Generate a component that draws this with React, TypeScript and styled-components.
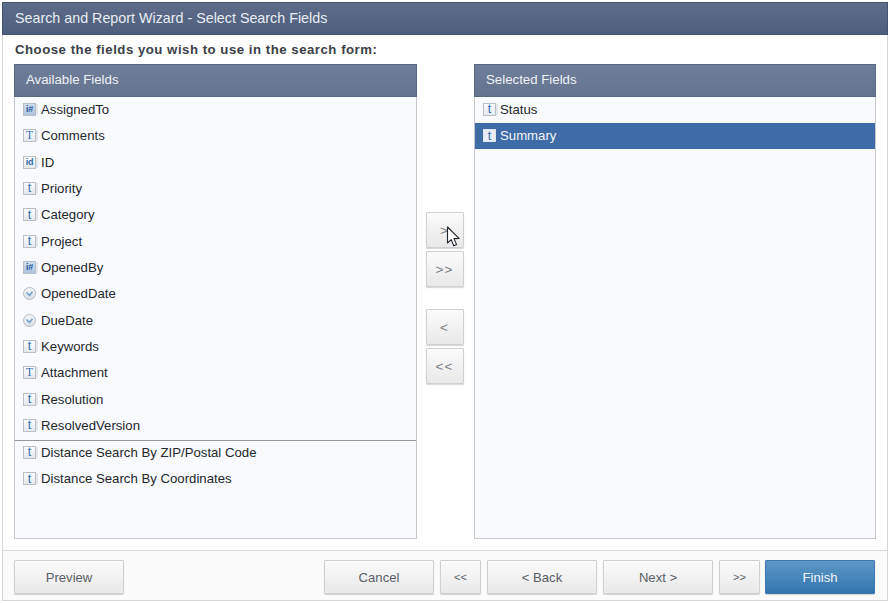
import React from "react";
import styled, { createGlobalStyle } from "styled-components";

const Global = createGlobalStyle`
  html, body { margin: 0; padding: 0; background: #fff; }
  body { width: 890px; height: 603px; overflow: hidden; font-family: "Liberation Sans", Arial, sans-serif; }
`;

const Frame = styled.div`
  box-sizing: border-box;
  width: 886px;
  height: 599px;
  margin: 2px 0 0 2px;
  border: 1px solid #d4d6da;
  border-top: 0;
  display: flex;
  flex-direction: column;
  position: relative;
`;

const TitleBar = styled.div`
  box-sizing: border-box;
  height: 33px;
  margin: 0 -1px;
  flex: none;
  padding: 0 0 2px 12px;
  display: flex;
  align-items: center;
  background: linear-gradient(#5d6c89, #4e5e7d);
  border: 1px solid #45536f;
  color: #e9edf3;
  font-size: 14.3px;
`;

const Instruction = styled.div`
  height: 29px;
  flex: none;
  padding-left: 12px;
  display: flex;
  align-items: center;
  font-size: 13.2px;
  font-weight: 700;
  letter-spacing: 0.52px;
  color: #3b4048;
`;

const Body = styled.div`
  height: 475px;
  flex: none;
  padding: 0 11px;
  display: grid;
  grid-template-columns: 403px 57px 402px;
`;

const Panel = styled.section`
  box-sizing: border-box;
  display: flex;
  flex-direction: column;
  border: 1px solid #c5c8cd;
  border-top: 0;
  background: linear-gradient(#fff 0, #f8fafe 44px);
  min-height: 0;
`;

const PanelHeader = styled.header`
  box-sizing: border-box;
  height: 33px;
  margin: 0 -1px;
  flex: none;
  padding: 0 0 2px 11px;
  display: flex;
  align-items: center;
  background: linear-gradient(#6f7f9b, #64748f);
  border: 1px solid #5a6983;
  color: #eef1f6;
  font-size: 13.25px;
`;

const FieldList = styled.ul`
  list-style: none;
  margin: -0.5px 0 0;
  padding: 0;
`;

const Row = styled.li<{ $selected?: boolean; $gap?: number }>`
  box-sizing: border-box;
  height: 26.33px;
  padding-left: 8px;
  display: flex;
  align-items: center;
  gap: ${(p) => p.$gap ?? 5}px;
  font-size: 13.2px;
  color: ${(p) => (p.$selected ? "#f2f5fa" : "#24272c")};
  background: ${(p) => (p.$selected ? "#3f6ba6" : "transparent")};
`;

const Separator = styled.li`
  height: 1px;
  margin: 1px 0 -1.4px;
  background: #93979e;
`;

const IconBox = styled.span<{ $kind: string; $selected?: boolean }>`
  box-sizing: border-box;
  width: 13px;
  height: 13px;
  flex: none;
  display: inline-flex;
  align-items: center;
  justify-content: center;
  border: 1px solid ${(p) => (p.$selected ? "#dfe6f0" : "#b9c0c9")};
  box-shadow: ${(p) => (p.$selected ? "none" : "3px 0 0 -1px #e3e6eb")};
  background: ${(p) =>
    p.$selected
      ? "#e8eef6"
      : p.$kind === "i#"
        ? "linear-gradient(#cfdced, #aec4de)"
        : "linear-gradient(#fbfcfe, #e4e9f0)"};
  color: ${(p) => (p.$kind === "i#" ? "#1f5a9e" : "#2f6cae")};
  font-family: ${(p) => (p.$kind === "T" ? '"Liberation Serif", serif' : '"Liberation Sans", sans-serif')};
  font-weight: ${(p) => (p.$kind === "i#" || p.$kind === "id" ? 700 : 400)};
  font-size: ${(p) =>
    p.$kind === "id" || p.$kind === "i#" ? "9px" : p.$kind === "T" ? "11.5px" : "12.5px"};
  letter-spacing: ${(p) => (p.$kind === "id" || p.$kind === "i#" ? "-0.3px" : "0")};
  line-height: 1;
`;

const Movers = styled.div`
  display: flex;
  flex-direction: column;
  align-items: center;
  padding: 148px 2px 0 0;
`;

const Button = styled.button<{ $primary?: boolean; $w?: number; $small?: boolean }>`
  box-sizing: border-box;
  width: ${(p) => p.$w ?? 110}px;
  height: 34px;
  padding: 0;
  flex: none;
  border: 1px solid ${(p) => (p.$primary ? "#3d77ad" : "#cfd0d2")};
  border-radius: 1px;
  background: ${(p) =>
    p.$primary ? "linear-gradient(#5d98c6, #3375ae)" : "linear-gradient(#fbfbfb, #e9e9e9)"};
  box-shadow: 0 1px 1px rgba(0, 0, 0, 0.16);
  color: ${(p) => (p.$primary ? "#f2f6fa" : "#5a6068")};
  font-family: "Liberation Sans", Arial, sans-serif;
  font-size: ${(p) => (p.$small ? "11px" : "13.1px")};
`;

const MoveButton = styled(Button)<{ $gapTop?: number }>`
  width: 38px;
  height: 36px;
  margin-top: ${(p) => p.$gapTop ?? 0}px;
  font-size: 13.5px;
  letter-spacing: 1px;
  color: #7a7f86;
`;

const Footer = styled.footer`
  box-sizing: border-box;
  flex: 1;
  margin-top: 11px;
  padding: 9px 12px 0 11px;
  border-top: 1px solid #d8d9dc;
  background: #fbfbfb;
  display: flex;
  align-items: flex-start;
`;

const FooterRight = styled.div`
  margin-left: auto;
  display: flex;
  gap: 6px;
`;

const FinishButton = styled(Button)`
  margin-left: -1px;
`;

const CursorArt = styled.svg`
  position: absolute;
  left: 443px;
  top: 224px;
  width: 15px;
  height: 22px;
`;

type Field = { kind: string; name: string };

const available: Field[] = [
  { kind: "i#", name: "AssignedTo" },
  { kind: "T", name: "Comments" },
  { kind: "id", name: "ID" },
  { kind: "t", name: "Priority" },
  { kind: "t", name: "Category" },
  { kind: "t", name: "Project" },
  { kind: "i#", name: "OpenedBy" },
  { kind: "date", name: "OpenedDate" },
  { kind: "date", name: "DueDate" },
  { kind: "t", name: "Keywords" },
  { kind: "T", name: "Attachment" },
  { kind: "t", name: "Resolution" },
  { kind: "t", name: "ResolvedVersion" },
];

const DateIcon = () => (
  <svg width="13" height="13" viewBox="0 0 13 13" style={{ flex: "none" }}>
    <defs>
      <linearGradient id="dateFill" x1="0" y1="0" x2="0" y2="1">
        <stop offset="0" stopColor="#f6f8fb" />
        <stop offset="1" stopColor="#d9dee6" />
      </linearGradient>
    </defs>
    <circle cx="6.5" cy="6.5" r="6" fill="url(#dateFill)" stroke="#b8bcc3" />
    <path d="M3.5 5.5 L6.5 8.5 L9.5 4.8" fill="none" stroke="#6d9ccb" strokeWidth="1.5" />
  </svg>
);

const FieldRow = ({ field, selected, gap }: { field: Field; selected?: boolean; gap?: number }) => (
  <Row $selected={selected} $gap={gap}>
    {field.kind === "date" ? (
      <DateIcon />
    ) : (
      <IconBox $kind={field.kind} $selected={selected}>
        {field.kind}
      </IconBox>
    )}
    <span>{field.name}</span>
  </Row>
);

export default function App() {
  return (
    <>
      <Global />
      <Frame>
        <TitleBar>Search and Report Wizard - Select Search Fields</TitleBar>
        <Instruction>Choose the fields you wish to use in the search form:</Instruction>
        <Body>
          <Panel>
            <PanelHeader>Available Fields</PanelHeader>
            <FieldList>
              {available.map((f) => (
                <FieldRow key={f.name} field={f} />
              ))}
              <Separator />
              <FieldRow field={{ kind: "t", name: "Distance Search By ZIP/Postal Code" }} />
              <FieldRow field={{ kind: "t", name: "Distance Search By Coordinates" }} />
            </FieldList>
          </Panel>
          <Movers>
            <MoveButton>&gt;</MoveButton>
            <MoveButton $gapTop={3}>&gt;&gt;</MoveButton>
            <MoveButton $gapTop={22}>&lt;</MoveButton>
            <MoveButton $gapTop={3}>&lt;&lt;</MoveButton>
          </Movers>
          <Panel>
            <PanelHeader>Selected Fields</PanelHeader>
            <FieldList>
              <FieldRow field={{ kind: "t", name: "Status" }} gap={4} />
              <FieldRow field={{ kind: "t", name: "Summary" }} gap={4} selected />
            </FieldList>
          </Panel>
        </Body>
        <Footer>
          <Button>Preview</Button>
          <FooterRight>
            <Button>Cancel</Button>
            <Button $w={41} $small>&lt;&lt;</Button>
            <Button>&lt; Back</Button>
            <Button>Next &gt;</Button>
            <Button $w={41} $small>&gt;&gt;</Button>
            <FinishButton $primary>Finish</FinishButton>
          </FooterRight>
        </Footer>
        <CursorArt viewBox="0 0 15 22">
          <path
            d="M1.5 1 L1.5 17 L5.2 13.6 L7.8 19.8 L10.6 18.6 L8 12.6 L13 12.4 Z"
            fill="#fff"
            stroke="#23262b"
            strokeWidth="1.1"
            strokeLinejoin="round"
          />
        </CursorArt>
      </Frame>
    </>
  );
}
